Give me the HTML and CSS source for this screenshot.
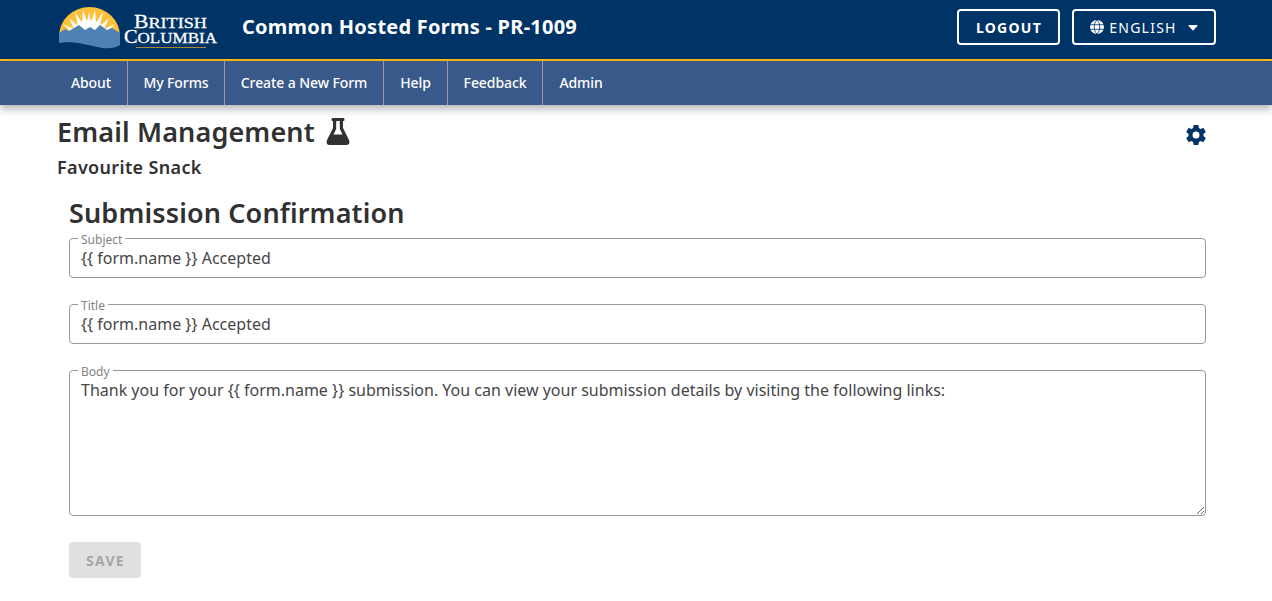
FILE: index.html
```html
<!DOCTYPE html>
<html lang="en">
<head>
<meta charset="utf-8">
<title>Common Hosted Forms</title>
<link rel="stylesheet" href="styles.css">
</head>
<body>
<header class="header">
  <svg class="logo" width="160" height="44" viewBox="0 0 160 44" role="img" aria-label="British Columbia">
    <path fill="#fcc03a" d="M1 31A30.500 29 0 0 1 62 31Z"/>
    <path fill="#fff" d="M14 28L5 19L16 24L11 13L20 21L17 7L24 18L25 5L29 17L31 7L33 17L37 5L38 18L45 7L42 21L51 13L46 24L57 19L48 28Z"/>
    <path fill="#fff" d="M14 28C17 19 24 15 31 15S45 19 48 28Z"/>
    <path fill="#4f82b3" d="M1 28L7 24L11 26L21 20L27 25L32 22L37 25L42 20L49 25L54 23L62 28V40C56 44 48 44 39 42C25 39 15 36 1 38Z"/>
    <g class="logo-text">
      <text x="76" y="22.500" textLength="73" lengthAdjust="spacingAndGlyphs"><tspan class="cap">B</tspan>RITISH</text>
      <text x="66" y="38" textLength="93" lengthAdjust="spacingAndGlyphs"><tspan class="cap">C</tspan>OLUMBIA</text>
    </g>
    <rect x="78" y="42" width="70" height="1" fill="#a58a35"/>
  </svg>
  <h1 class="app-title">Common Hosted Forms - PR-1009</h1>
  <div class="actions">
    <button class="btn logout"><span>LOGOUT</span></button>
    <button class="btn language">
      <svg width="14" height="14" viewBox="0 0 14 14"><circle cx="7" cy="7" r="7" fill="#fff"/><path fill="none" stroke="#036" stroke-width=".8" d="M0 4.700H14M0 9.300H14M7 0C3.300 3 3.300 11 7 14C10.700 11 10.700 3 7 0Z"/></svg>
      <span>ENGLISH</span>
      <svg class="caret" width="10" height="6" viewBox="0 0 10 6"><path fill="#fff" d="M.8 0H9.200Q10 .4 9.400 1L5.500 5.200Q5 5.700 4.500 5.200L.6 1Q0 .4.8 0Z"/></svg>
    </button>
  </div>
</header>
<nav class="nav">
  <a class="about">About</a><a class="my-forms">My Forms</a><a class="create">Create a New Form</a><a class="help">Help</a><a class="feedback">Feedback</a><a class="admin">Admin</a>
</nav>
<main class="main">
  <div class="heading-row">
    <h2 class="page-title">Email Management</h2>
    <svg class="flask" width="24" height="28" viewBox="0 0 24 28"><path fill="#313132" fill-rule="evenodd" d="M6.500 0H17.500Q18.500 0 18.500 1.500T17.500 3H17V10L23 22Q24.500 27 20.500 27H3.500Q-.5 27 1 22L7 10V3H6.500Q5.500 3 5.500 1.500T6.500 0ZM10.200 3V11L7.500 16.500H16.500L13.800 11V3Z"/></svg>
    <svg class="gear" width="24" height="24" viewBox="0 0 24 24"><path fill="#036" d="M12 15.500A3.500 3.500 0 0 1 8.500 12 3.500 3.500 0 0 1 12 8.500a3.500 3.500 0 0 1 3.500 3.500 3.500 3.500 0 0 1-3.500 3.500m7.430-2.530c.04-.32.070-.64.070-.97 0-.33-.03-.66-.07-1l2.110-1.630c.19-.15.240-.42.120-.64l-2-3.460c-.12-.22-.39-.31-.61-.22l-2.490 1c-.52-.39-1.060-.73-1.690-.98l-.37-2.650A.506.506 0 0 0 14 2h-4c-.25 0-.46.180-.5.420l-.37 2.650c-.63.250-1.170.59-1.690.98l-2.490-1c-.22-.09-.49 0-.61.220l-2 3.460c-.13.220-.07.490.12.640L4.570 11c-.04.340-.07.670-.07 1 0 .33.030.65.070.97l-2.110 1.660c-.19.150-.25.420-.12.640l2 3.460c.12.220.39.300.61.220l2.490-1.010c.52.400 1.060.74 1.690.99l.37 2.650c.04.240.25.420.5.420h4c.25 0 .46-.18.500-.42l.37-2.650c.63-.26 1.170-.59 1.690-.99l2.490 1.010c.22.080.49 0 .61-.22l2-3.460c.12-.22.070-.49-.12-.64z"/></svg>
  </div>
  <h3 class="form-name">Favourite Snack</h3>
  <form class="email-form">
    <h2 class="section-title">Submission Confirmation</h2>
    <div class="field"><label for="subject">Subject</label><input id="subject" value="{{ form.name }} Accepted"></div>
    <div class="field"><label for="title">Title</label><input id="title" value="{{ form.name }} Accepted"></div>
    <div class="field"><label for="body">Body</label><textarea id="body">Thank you for your {{ form.name }} submission. You can view your submission details by visiting the following links:</textarea></div>
    <button class="save" type="button" disabled>SAVE</button>
  </form>
</main>
</body>
</html>
```
FILE: styles.css
```css
* { box-sizing: border-box; }
body { margin: 0; background: #fff; color: #313132; font-family: "Noto Sans", sans-serif; }
h1, h2, h3 { margin: 0; white-space: nowrap; }
svg { display: block; flex: none; }

.header { display: flex; align-items: flex-start; height: 61px; padding: 0 56px 0 58px; background: #036; border-bottom: 2px solid #fcba19; color: #fff; }
.logo { margin-top: 5px; }
.logo-text { fill: #fff; stroke: #fff; stroke-width: .3px; font: 15.5px "Liberation Serif", serif; }
.cap { font-size: 18.5px; }
.app-title { margin: 13px 0 0 24px; font-size: 20px; line-height: 28px; font-weight: 700; letter-spacing: .25px; }
.actions { display: flex; gap: 12px; margin: 9px 0 0 auto; }
.btn { display: flex; align-items: center; justify-content: center; height: 36px; padding: 0; border: 2px solid #fff; border-radius: 4px; background: none; color: #fff; font-family: inherit; font-size: 14px; letter-spacing: 1.25px; }
.logout { width: 103px; font-weight: 700; }
.logout span { padding-left: 1px; }
.language { width: 144px; gap: 5px; }
.caret { margin: 1px 0 0 6px; }

.nav { display: flex; height: 44px; padding-left: 55px; background: #38598a; color: #fff; box-shadow: 0 4px 8px rgba(0, 0, 0, .3); font-size: 14px; font-weight: 500; line-height: 44px; letter-spacing: -.09px; }
.nav a { border-right: 1px solid #9b9b9b; text-align: center; white-space: nowrap; }
.about { width: 73px; }
.my-forms { width: 97px; }
.create { width: 159px; }
.help { width: 64px; }
.feedback { width: 95px; }
.nav .admin { width: 76px; border: 0; }

.main { padding: 9px 66px 0 57px; }
.heading-row { display: flex; height: 36px; }
.page-title { font-size: 27px; line-height: 36px; font-weight: 600; letter-spacing: .14px; }
.flask { margin: 4px 0 0 11px; }
.gear { margin: 9px -1.5px 0 auto; }
.form-name { margin-top: 4px; font-size: 18px; line-height: 26px; font-weight: 600; letter-spacing: .34px; }
.email-form { padding: 18px 0 0 12px; }
.section-title { height: 40px; font-size: 27px; line-height: 29px; font-weight: 600; letter-spacing: .14px; }
.field { position: relative; margin: 0 0 26px; }
.field label { position: absolute; top: -8px; left: 9px; padding: 0 3px; background: #fff; color: #838384; font-size: 12px; line-height: 20px; }
.field input, .field textarea { display: block; width: 100%; height: 40px; margin: 0; padding: 0 11px; border: 1px solid #989898; border-radius: 4px; outline: 0; background: #fff; color: #464647; font: 16px/24px "Noto Sans", sans-serif; }
.field textarea { height: 146px; padding-top: 7px; resize: vertical; }
.save { display: block; width: 72px; height: 36px; padding: 0 0 0 1px; border: 0; border-radius: 4px; background: #e0e0e0; color: #a6a6a6; font: 700 14px "Noto Sans", sans-serif; letter-spacing: 1.25px; }
```
